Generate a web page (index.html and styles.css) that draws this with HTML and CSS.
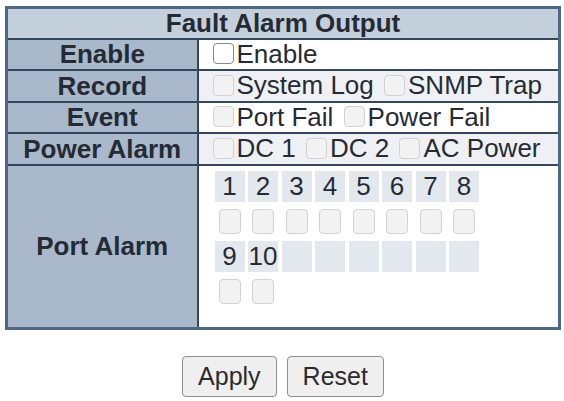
FILE: index.html
```html
<!DOCTYPE html>
<html lang="en">
<head>
    <meta charset="UTF-8">
    <meta name="viewport" content="width=device-width, initial-scale=1.0">
    <title>Fault Alarm Output</title>
    <link rel="stylesheet" href="styles.css">
</head>
<body>
    <form>
        <table class="config">
            <tr>
                <th colspan="2" class="title">Fault Alarm Output</th>
            </tr>
            <tr>
                <td class="param">Enable</td>
                <td class="value">
                    <label class="opt"><input type="checkbox" class="chk on">Enable</label>
                </td>
            </tr>
            <tr>
                <td class="param">Record</td>
                <td class="value alt">
                    <label class="opt"><input type="checkbox" class="chk" disabled>System Log</label>
                    <label class="opt"><input type="checkbox" class="chk" disabled>SNMP Trap</label>
                </td>
            </tr>
            <tr>
                <td class="param">Event</td>
                <td class="value">
                    <label class="opt"><input type="checkbox" class="chk" disabled>Port Fail</label>
                    <label class="opt"><input type="checkbox" class="chk" disabled>Power Fail</label>
                </td>
            </tr>
            <tr>
                <td class="param">Power Alarm</td>
                <td class="value alt">
                    <label class="opt"><input type="checkbox" class="chk" disabled>DC 1</label>
                    <label class="opt"><input type="checkbox" class="chk" disabled>DC 2</label>
                    <label class="opt"><input type="checkbox" class="chk" disabled>AC Power</label>
                </td>
            </tr>
            <tr>
                <td class="param">Port Alarm</td>
                <td class="value ports-cell">
                    <div class="ports">
                        <span class="num">1</span><span class="num">2</span><span class="num">3</span><span class="num">4</span>
                        <span class="num">5</span><span class="num">6</span><span class="num">7</span><span class="num">8</span>
                        <span class="box"><input type="checkbox" class="chk" disabled></span>
                        <span class="box"><input type="checkbox" class="chk" disabled></span>
                        <span class="box"><input type="checkbox" class="chk" disabled></span>
                        <span class="box"><input type="checkbox" class="chk" disabled></span>
                        <span class="box"><input type="checkbox" class="chk" disabled></span>
                        <span class="box"><input type="checkbox" class="chk" disabled></span>
                        <span class="box"><input type="checkbox" class="chk" disabled></span>
                        <span class="box"><input type="checkbox" class="chk" disabled></span>
                        <span class="num">9</span><span class="num">10</span><span class="num"></span><span class="num"></span>
                        <span class="num"></span><span class="num"></span><span class="num"></span><span class="num"></span>
                        <span class="box"><input type="checkbox" class="chk" disabled></span>
                        <span class="box"><input type="checkbox" class="chk" disabled></span>
                    </div>
                </td>
            </tr>
        </table>

        <div class="actions">
            <button type="button" class="btn">Apply</button>
            <button type="reset" class="btn">Reset</button>
        </div>
    </form>
</body>
</html>
```

FILE: styles.css
```css
* {
    box-sizing: border-box;
}

body {
    margin: 0;
    padding: 6px 0 0 5px;
    font-family: "Liberation Sans", Arial, sans-serif;
    font-size: 26px;
    color: #252b33;
    background-color: #fff;
}

.config {
    width: 556px;
    border-collapse: collapse;
    border: 3px solid #4e6987;
}

.config th,
.config td {
    border: 2px solid #34465c;
    padding: 0;
    height: 31px;
    line-height: 28px;
}

.title {
    height: 34px;
    background-color: #c4cfdc;
    font-weight: bold;
}

.param {
    width: 191px;
    background-color: #a9b9cb;
    font-weight: bold;
    text-align: center;
}

.value {
    padding-left: 14px !important;
    white-space: nowrap;
    background-color: #fff;
}

.value.alt {
    background-color: #eef0f3;
}

.opt {
    display: inline-flex;
    align-items: center;
    margin-right: 3px;
}

.chk {
    appearance: none;
    -webkit-appearance: none;
    width: 21px;
    height: 21px;
    margin: 0 3px 0 0;
    border: 1px solid #d2d2d2;
    border-radius: 4px;
    background-color: #f2f2f2;
}

.chk.on {
    border-color: #8a8a8a;
    background-color: #fff;
}

.ports {
    display: grid;
    grid-template-columns: repeat(8, 30px);
    grid-auto-rows: 31px;
    column-gap: 3.5px;
    row-gap: 4px;
    padding: 5px 0 20px 2px;
}

.num {
    background-color: #e3e8ee;
    text-align: center;
    line-height: 31px;
}

.box {
    display: flex;
    align-items: center;
    justify-content: center;
}

.box .chk {
    width: 22px;
    height: 25px;
    margin: 0;
}

.actions {
    width: 556px;
    margin-top: 26px;
    display: flex;
    justify-content: center;
    gap: 10px;
}

.btn {
    height: 41px;
    padding: 0 15px;
    font-family: "Liberation Sans", Arial, sans-serif;
    font-size: 25px;
    color: #2b2b2b;
    background-color: #efefef;
    border: 1px solid #8f8f8f;
    border-radius: 4px;
}
```
